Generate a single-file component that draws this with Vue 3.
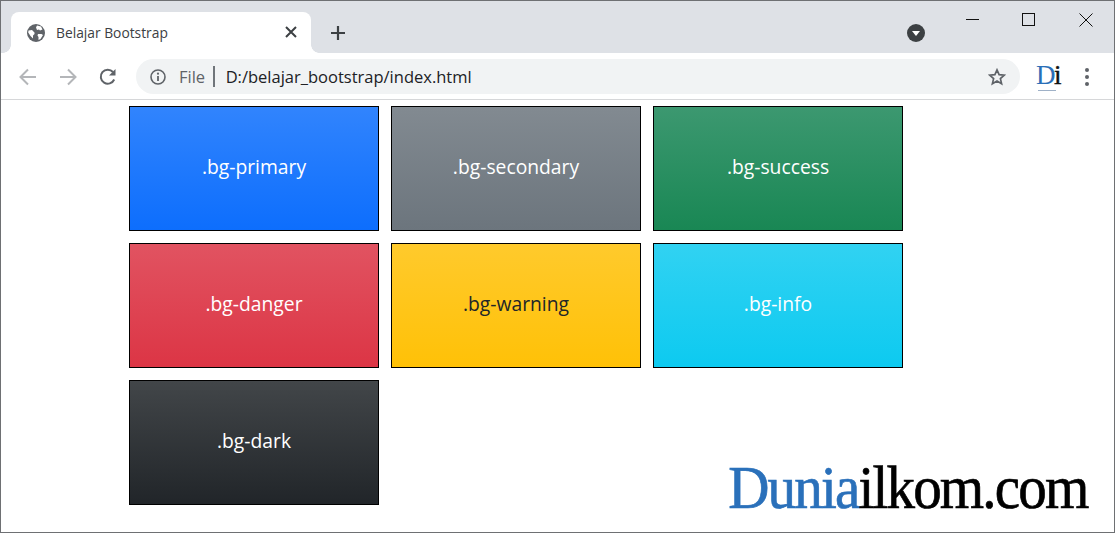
<script setup>
const boxes = [
  { label: '.bg-primary', cls: 'primary' },
  { label: '.bg-secondary', cls: 'secondary' },
  { label: '.bg-success', cls: 'success' },
  { label: '.bg-danger', cls: 'danger' },
  { label: '.bg-warning', cls: 'warning' },
  { label: '.bg-info', cls: 'cyan' },
  { label: '.bg-dark', cls: 'dark' }
]
</script>

<template>
  <div class="window">
    <header class="tabstrip">
      <div class="tab">
        <svg class="globe" width="18" height="18" viewBox="0 0 18 18">
          <circle cx="9" cy="9" r="9" fill="#5f6368" />
          <path d="M1.5 6.5 5 6l2.5 2.5v1.5L6 11.5v3L3.5 12 1.2 8.5zM10 1.5l4 1 1.5 3-2.5 1-1-1-2 .5-1-2.5zM11 10h3.5l1.5 1-2.5 4-2 1v-3l-1-1.5z" fill="#fff" />
        </svg>
        <span class="tab-title">Belajar Bootstrap</span>
        <svg class="tab-close" width="12" height="12" viewBox="0 0 12 12">
          <path d="M1 1l10 10M11 1L1 11" stroke="#3c4043" stroke-width="2" />
        </svg>
      </div>
      <svg class="newtab" width="16" height="16" viewBox="0 0 16 16">
        <path d="M8 1v14M1 8h14" stroke="#3c4043" stroke-width="2.2" />
      </svg>
      <div class="strip-spacer"></div>
      <svg class="profile" width="18" height="18" viewBox="0 0 18 18">
        <circle cx="9" cy="9" r="9" fill="#3c4043" />
        <path d="M5 7h8l-4 5z" fill="#fff" />
      </svg>
      <div class="winctrls">
        <svg width="14" height="14" viewBox="0 0 14 14"><path d="M1 6.5h13" stroke="#111" /></svg>
        <svg width="14" height="14" viewBox="0 0 14 14"><rect x=".5" y=".5" width="12" height="12" fill="none" stroke="#111" /></svg>
        <svg width="14" height="14" viewBox="0 0 14 14"><path d="M.5.5l13 13M13.5.5l-13 13" stroke="#111" /></svg>
      </div>
    </header>

    <nav class="toolbar">
      <svg class="navicon" width="20" height="20" viewBox="0 0 20 20">
        <path d="M18 10H3M10 2.5 2.5 10l7.5 7.5" fill="none" stroke="#b4b6b9" stroke-width="2" />
      </svg>
      <svg class="navicon" width="20" height="20" viewBox="0 0 20 20">
        <path d="M2 10h15M10 2.5l7.5 7.5-7.5 7.5" fill="none" stroke="#b4b6b9" stroke-width="2" />
      </svg>
      <svg class="navicon" width="20" height="20" viewBox="0 0 20 20">
        <path d="M16.2 12.5A7 7 0 1 1 15 5" fill="none" stroke="#5f6368" stroke-width="2" />
        <path d="M17.5 2v6.5H11z" fill="#5f6368" />
      </svg>
      <div class="omnibox">
        <svg class="info-icon" width="16" height="16" viewBox="0 0 16 16">
          <circle cx="8" cy="8" r="7" fill="none" stroke="#5f6368" stroke-width="1.6" />
          <path d="M8 7v5" stroke="#5f6368" stroke-width="1.8" />
          <circle cx="8" cy="4.7" r="1.1" fill="#5f6368" />
        </svg>
        <span class="scheme">File</span>
        <span class="sep"></span>
        <span class="url">D:/belajar_bootstrap/index.html</span>
        <svg class="star" width="18" height="18" viewBox="0 0 18 18">
          <path d="M9 1.9l2.1 4.8 5.2.5-3.9 3.4 1.2 5.1L9 13.1l-4.6 2.6 1.2-5.1-3.9-3.4 5.2-.5z" fill="none" stroke="#5f6368" stroke-width="1.7" />
        </svg>
      </div>
      <div class="ext">
        <span class="ext-d">D</span><span class="ext-i">i</span>
        <i class="ext-line"></i>
      </div>
      <div class="dots"><i></i><i></i><i></i></div>
    </nav>

    <main class="page">
      <div class="grid">
        <div v-for="b in boxes" :key="b.cls" class="box" :class="b.cls">{{ b.label }}</div>
      </div>
      <div class="logo"><span class="blue">Dunia</span>ilkom.com</div>
    </main>
  </div>
</template>

<style scoped>
.window {
  width: 1115px;
  height: 533px;
  box-sizing: border-box;
  border: 1px solid #6e7073;
  display: flex;
  flex-direction: column;
  background: #fff;
  overflow: hidden;
  font-family: "Open Sans", "Noto Sans", sans-serif;
}
.tabstrip {
  height: 52px;
  flex: none;
  box-sizing: border-box;
  background: #dee1e6;
  display: flex;
  align-items: flex-end;
  padding-left: 10px;
}
.tab {
  position: relative;
  width: 300px;
  height: 41px;
  background: #fff;
  border-radius: 8px 8px 0 0;
  display: flex;
  align-items: center;
  padding: 0 14px 0 16px;
  box-sizing: border-box;
}
.tab::before,
.tab::after {
  content: "";
  position: absolute;
  bottom: 0;
  width: 8px;
  height: 8px;
}
.tab::before {
  left: -8px;
  background: radial-gradient(circle at 0 0, #dee1e6 7.5px, #fff 8px);
}
.tab::after {
  right: -8px;
  background: radial-gradient(circle at 100% 0, #dee1e6 7.5px, #fff 8px);
}
.tab-title {
  margin-left: 11px;
  font-size: 13.8px;
  color: #3c4043;
  flex: 1;
}
.tab-close {
  margin-bottom: 1px;
}
.newtab {
  margin: 0 0 12px 19px;
}
.strip-spacer {
  flex: 1;
}
.profile {
  margin-bottom: 11px;
}
.winctrls {
  align-self: flex-start;
  display: flex;
  gap: 43px;
  margin: 12px 21px 0 40px;
}
.toolbar {
  height: 47px;
  flex: none;
  box-sizing: border-box;
  border-bottom: 1px solid #d6d7d9;
  display: flex;
  align-items: center;
  padding: 1px 0 0 17px;
  background: #fff;
}
.navicon {
  margin-right: 20px;
}
.omnibox {
  width: 884px;
  height: 35px;
  margin-left: -2px;
  border-radius: 18px;
  background: #f1f3f4;
  display: flex;
  align-items: center;
  padding: 0 14px;
  box-sizing: border-box;
}
.info-icon {
  flex: none;
}
.scheme {
  margin-left: 13px;
  font-size: 16.5px;
  color: #5f6368;
}
.sep {
  width: 1.5px;
  height: 21px;
  background: #70757a;
  margin: 0 11px 0 8px;
}
.url {
  flex: 1;
  font-size: 16.5px;
  color: #202124;
}
.star {
  flex: none;
}
.ext {
  position: relative;
  width: 24px;
  height: 28px;
  margin-left: 16px;
  font-family: "Liberation Serif", serif;
  font-size: 27px;
  line-height: 25px;
  letter-spacing: -1.5px;
  white-space: nowrap;
}
.ext-d {
  color: #2a6fb8;
}
.ext-i {
  color: #111;
  -webkit-text-stroke: 0.4px #111;
}
.ext-line {
  position: absolute;
  left: 2px;
  right: 4px;
  bottom: 0;
  height: 1px;
  background: #9fb1c7;
}
.dots {
  margin-left: 25px;
  display: flex;
  flex-direction: column;
  gap: 3px;
}
.dots i {
  width: 4px;
  height: 4px;
  border-radius: 50%;
  background: #5f6368;
}
.page {
  flex: 1;
  position: relative;
}
.grid {
  display: grid;
  grid-template-columns: repeat(3, 250px);
  grid-auto-rows: 125px;
  gap: 12px;
  padding: 6px 0 0 128px;
}
.box {
  box-sizing: border-box;
  border: 1px solid #000;
  display: flex;
  align-items: center;
  justify-content: center;
  padding-bottom: 4px;
  font-size: 19.3px;
  color: #fff;
}
.primary { background: linear-gradient(#3184fd, #0d6efd); }
.secondary { background: linear-gradient(#828a91, #6c757d); }
.success { background: linear-gradient(#3c9870, #198754); }
.danger { background: linear-gradient(#e15361, #dc3545); }
.warning { background: linear-gradient(#ffca2c, #ffc107); color: #212529; }
.cyan { background: linear-gradient(#31d2f2, #0dcaf0); }
.dark { background: linear-gradient(#424649, #212529); }
.logo {
  position: absolute;
  right: 27px;
  bottom: 9px;
  font-family: "Liberation Serif", serif;
  font-size: 62px;
  line-height: 72px;
  letter-spacing: -2px;
  color: #000;
  white-space: nowrap;
  -webkit-text-stroke: 0.7px currentColor;
  transform: scaleX(0.92);
  transform-origin: right center;
}
.blue {
  color: #2a70ba;
}
</style>
